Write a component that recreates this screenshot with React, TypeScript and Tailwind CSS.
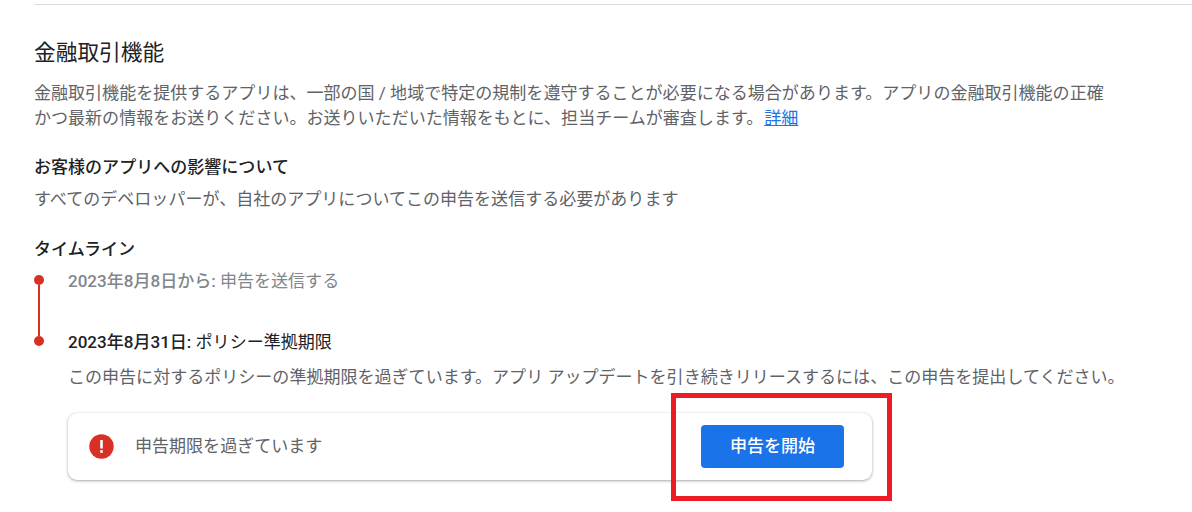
const font = { fontFamily: 'Roboto, "Noto Sans CJK JP", sans-serif' };

function AlertIcon() {
  return (
    <svg width="25" height="25" viewBox="0 0 25 25" className="shrink-0">
      <circle cx="12.5" cy="12.5" r="12.2" fill="#d93025" />
      <rect x="11.2" y="6" width="2.6" height="8.5" fill="#fff" />
      <rect x="11.2" y="16.2" width="2.6" height="2.6" fill="#fff" />
    </svg>
  );
}

export default function App() {
  return (
    <div className="relative h-[512px] w-[1192px] overflow-hidden bg-white" style={font}>
      <div className="pl-[34px]">
        <div className="mt-1 h-px bg-[#dadce0]" />

        <h2 className="mt-[34px] text-[21.7px] leading-[28px] text-[#202124]">金融取引機能</h2>
        <p className="mt-[14px] whitespace-nowrap text-[17.05px] leading-[25px] text-[#5f6368]">
          金融取引機能を提供するアプリは、一部の国 / 地域で特定の規制を遵守することが必要になる場合があります。アプリの金融取引機能の正確
          <br />
          かつ最新の情報をお送りください。お送りいただいた情報をもとに、担当チームが審査します。
          <a className="ml-px text-[#1a73e8] underline">詳細</a>
        </p>

        <h3 className="mt-[24px] text-[17.05px] font-medium leading-[25px] text-[#202124]">お客様のアプリへの影響について</h3>
        <p className="mt-[7px] text-[17.05px] leading-[25px] text-[#5f6368]">
          すべてのデベロッパーが、自社のアプリについてこの申告を送信する必要があります
        </p>

        <h3 className="mt-[25px] text-[17.05px] font-medium leading-[25px] text-[#202124]">タイムライン</h3>

        <div className="mt-[7px] flex">
          <div className="flex w-[34px] shrink-0 flex-col pt-[6px]">
            <div className="h-[10px] w-[10px] rounded-full bg-[#d93025]" />
            <div className="ml-1 h-[51px] w-[2px] bg-[#d93025]" />
            <div className="h-[10px] w-[10px] rounded-full bg-[#d93025]" />
          </div>
          <div className="min-w-0 flex-1">
            <div className="text-[17.05px] leading-[25px] text-[#80868b]">
              <span className="font-medium">2023年8月8日から:</span> 申告を送信する
            </div>
            <div className="mt-[36px] text-[17.05px] leading-[25px] text-[#202124]">
              <span className="font-medium">2023年8月31日:</span> ポリシー準拠期限
            </div>
            <p className="mt-[10px] whitespace-nowrap text-[17.05px] leading-[25px] text-[#5f6368]">
              この申告に対するポリシーの準拠期限を過ぎています。アプリ アップデートを引き続きリリースするには、この申告を提出してください。
            </p>
            <div className="mt-[23px] flex h-[67px] w-[804px] items-center rounded-[9px] bg-white pl-[21px] pr-[28px] shadow-[0_1px_3px_rgba(60,64,67,0.45),0_0_1px_rgba(60,64,67,0.15)]">
              <AlertIcon />
              <span className="ml-[21px] text-[17.05px] text-[#5f6368]">申告期限を過ぎています</span>
              <button className="ml-auto h-[43px] w-[143px] rounded-[4px] bg-[#1a73e8] text-[17px] font-medium text-white">
                申告を開始
              </button>
            </div>
          </div>
        </div>
      </div>

      <div className="absolute left-[671px] top-[393px] h-[108px] w-[221px] border-[5px] border-[#ed1c24]" />
    </div>
  );
}
